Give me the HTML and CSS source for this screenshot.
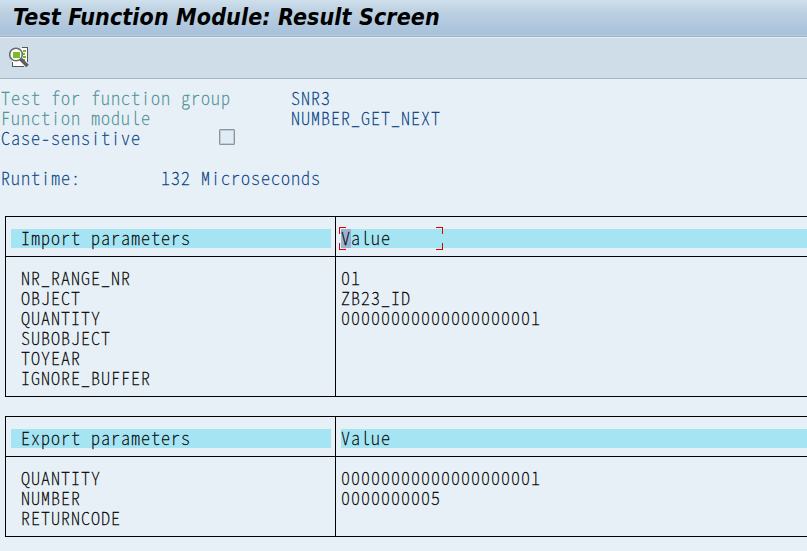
FILE: index.html
```html
<!DOCTYPE html>
<html lang="en">
<head>
<meta charset="utf-8">
<title>Test Function Module: Result Screen</title>
<link rel="stylesheet" href="styles.css">
</head>
<body>
<header class="titlebar"><h1>Test Function Module: Result Screen</h1></header>
<nav class="toolbar">
<svg class="icon" width="20" height="21" viewBox="0 0 20 21" shape-rendering="crispEdges">
<path d="M12 1h6v18H3v-6l9-3z" fill="#fff"/>
<path d="M13 .5h5.500v14M3.500 15v4.500h11" fill="none" stroke="#555"/>
<path d="M14 3.500h3M14 6.500h2M14 9.500h3M14 12.500h2" stroke="#77b82a" stroke-width="2"/>
<circle cx="7" cy="7.500" r="6.300" fill="#fff" stroke="#6a6a6a" stroke-width="1.600" shape-rendering="auto"/>
<path d="M4 5h7v6H4z" fill="#7dbb2b"/>
<path d="M11.500 12l7 7" stroke="#5b5d5f" stroke-width="3.500" shape-rendering="auto"/>
</svg>
</nav>
<main>
<dl class="info">
<dt class="muted">Test for function group</dt><dd>SNR3</dd>
<dt class="muted">Function module</dt><dd>NUMBER_GET_NEXT</dd>
<dt class="case">Case-sensitive <span class="check"></span></dt><dd></dd>
</dl>
<div class="runtime"><span>Runtime:</span><span>132 Microseconds</span></div>
<section class="table">
<div class="head"><div class="cell"><span class="band">Import parameters</span></div><div class="cell"><span class="band focus"><mark>V</mark>alue<i class="corners"></i></span></div></div>
<div class="body">
<div class="cell"><p>NR_RANGE_NR</p><p>OBJECT</p><p>QUANTITY</p><p>SUBOBJECT</p><p>TOYEAR</p><p>IGNORE_BUFFER</p></div>
<div class="cell"><p>01</p><p>ZB23_ID</p><p>00000000000000000001</p></div>
</div>
</section>
<section class="table">
<div class="head"><div class="cell"><span class="band">Export parameters</span></div><div class="cell"><span class="band">Value</span></div></div>
<div class="body">
<div class="cell"><p>QUANTITY</p><p>NUMBER</p><p>RETURNCODE</p></div>
<div class="cell"><p>00000000000000000001</p><p>0000000005</p></div>
</div>
</section>
</main>
</body>
</html>
```
FILE: styles.css
```css
* { box-sizing: border-box; }
body { margin: 0; height: 551px; overflow: hidden; background: #e8f0f7; }
.titlebar { height: 38px; padding-left: 13px; background: linear-gradient(#cfdfec, #bcd0e0 35%, #aac3dc 90%) 0 0 / 100% 35px no-repeat, #b8cbdc; border-bottom: 1px solid #eaf1f6; box-shadow: inset 0 -1px #9eb3c5; }
h1 { margin: 0; font: italic bold 23px/34px "DejaVu Sans Condensed", "DejaVu Sans", sans-serif; font-stretch: condensed; letter-spacing: .12px; white-space: nowrap; color: #000; }
.toolbar { height: 41px; padding: 9px 0 0 9px; background: #cfdde8; border-bottom: 1px solid #a4b5c4; }
.icon { display: block; }
main { padding-top: 10px; font: 100 18px/16px "Noto Sans CJK KR", "Liberation Mono", monospace; font-feature-settings: "hwid"; letter-spacing: 1px; white-space: nowrap; -webkit-text-stroke: .3px; }
.info { display: grid; grid-template-columns: 290px 1fr; grid-auto-rows: 20px; margin: 0; padding-left: 1px; color: #003c82; }
dd { margin: 0; }
.muted { color: #488d95; }
.case { display: flex; }
.check { width: 16px; height: 16px; margin-left: 78px; background: #dfebf5; border: 1px solid #8e9499; border-radius: 1px; box-shadow: inset 0 0 0 1px #c3cbd2; }
.runtime { display: grid; grid-template-columns: 160px 1fr; margin-top: 20px; height: 20px; padding-left: 1px; color: #003c82; }
.table { margin: 27px 0 0 5px; border: 1px solid #000; border-right: 0; color: #000; }
.table + .table { margin-top: 19px; }
.head, .body { display: grid; grid-template-columns: 330px 1fr; }
.head { height: 40px; border-bottom: 1px solid #000; }
.cell:first-child { border-right: 1px solid #000; }
.head .cell { padding: 12px 4px 0 5px; }
.head .cell + .cell { padding-right: 0; }
.band { display: block; height: 19px; background: #a5e5f3; padding-left: 10px; }
.cell + .cell .band { padding-left: 0; }
.focus { position: relative; }
mark { display: inline-block; height: 19px; width: 10px; background: #9bb3d1; color: #000; }
.corners {
  --c: linear-gradient(#e00000, #e00000);
  --d: linear-gradient(#333, #333);
  position: absolute; top: -2px; left: -2px; width: 104px; height: 23px;
  background:
    var(--c) 0 0 / 7px 1px, var(--c) 0 0 / 1px 7px,
    var(--c) 100% 0 / 7px 1px, var(--c) 100% 0 / 1px 7px,
    var(--c) 0 100% / 7px 1px, var(--c) 0 100% / 1px 7px,
    var(--c) 100% 100% / 7px 1px, var(--c) 100% 100% / 1px 7px;
  background-repeat: no-repeat;
}
.body .cell { padding: 12px 0 7px 15px; }
.body .cell + .cell { padding-left: 5px; }
p { margin: 0; height: 20px; }
```
